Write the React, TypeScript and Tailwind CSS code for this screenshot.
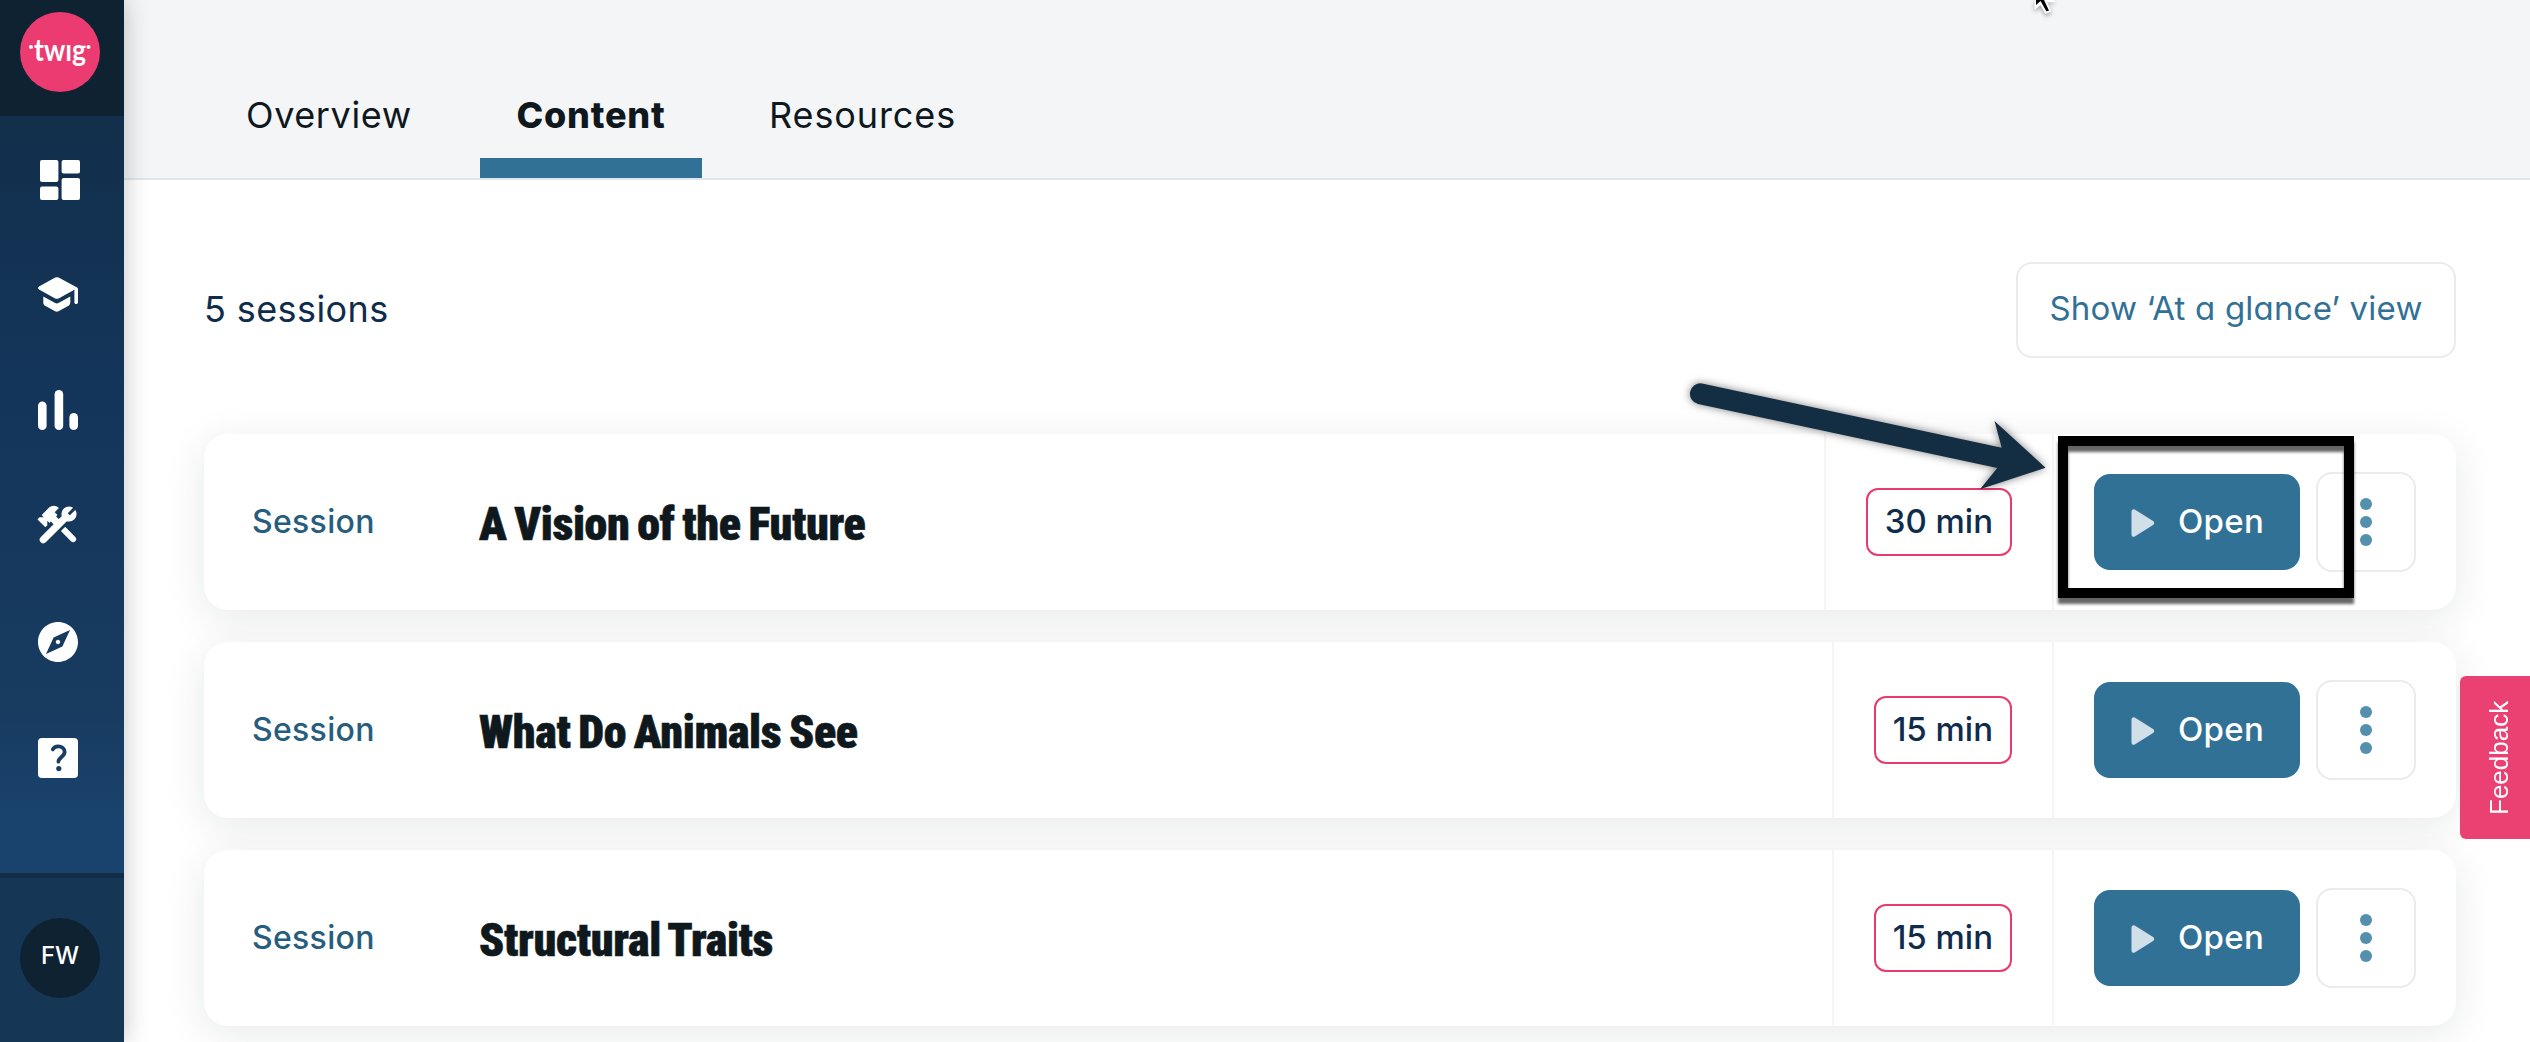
import { MdExplore } from 'react-icons/md';

const sessions = [
  { title: 'A Vision of the Future', time: '30 min' },
  { title: 'What Do Animals See', time: '15 min' },
  { title: 'Structural Traits', time: '15 min' },
];

function DashboardIcon() {
  return (
    <svg className="ml-0.5 size-10" viewBox="0 0 40 40" fill="currentColor">
      <rect x="0" y="0" width="18.4" height="22" rx="2" />
      <rect x="0" y="26.6" width="18.4" height="13.4" rx="2" />
      <rect x="21.6" y="0" width="18.4" height="13.4" rx="2" />
      <rect x="21.6" y="18" width="18.4" height="22" rx="2" />
    </svg>
  );
}

function SchoolIcon() {
  return (
    <svg className="size-10" viewBox="0 2 40 40" fill="currentColor">
      <path d="M5.3 22.6v6.2c0 1.3.7 2.4 1.8 3l10 5.5a3.5 3.5 0 0 0 3.4 0l10-5.5a3.4 3.4 0 0 0 1.8-3v-6.2l-11.8 6.4a3.5 3.5 0 0 1-3.4 0L5.3 22.6z" />
      <path d="M17.2 3.6L1 12.5c-1.2.7-1.2 2.4 0 3.1l16.2 8.8a3.5 3.5 0 0 0 3.4 0l15.8-8.6v12.4c0 1 .8 1.8 1.8 1.8s1.8-.8 1.8-1.8V14.9c0-.6-.4-1.2-.9-1.5L20.6 3.6a3.5 3.5 0 0 0-3.4 0z" />
    </svg>
  );
}

function ChartIcon() {
  return (
    <svg className="size-10" viewBox="0 1 40 40" overflow="visible" fill="currentColor">
      <rect x="0" y="11.5" width="8.6" height="28.5" rx="4.3" />
      <rect x="16.6" y="0" width="8.6" height="40" rx="4.3" />
      <rect x="31.4" y="23" width="8.6" height="17" rx="4.3" />
    </svg>
  );
}

function ToolsIcon() {
  return (
    <svg
      className="-mt-1.5 -mb-0.5 -ml-1 size-12"
      viewBox="0 0 24 24"
      fill="currentColor"
      stroke="currentColor"
      strokeWidth="0.6"
      strokeLinejoin="round"
    >
      <path d="M17.5 10c1.93 0 3.5-1.57 3.5-3.5 0-.58-.16-1.12-.41-1.6l-2.7 2.7-1.49-1.49 2.7-2.7c-.48-.25-1.02-.41-1.6-.41C15.57 3 14 4.57 14 6.5c0 .41.08.8.21 1.16l-1.85 1.85-1.78-1.78.71-.71-1.41-1.41L12 3.49a3 3 0 0 0-4.24 0L4.22 7.03l1.41 1.41H2.81l-.71.71 3.54 3.54.71-.71V9.15l1.41 1.41.71-.71 1.78 1.78-6.7 6.7a1.5 1.5 0 0 0 2.12 2.12L16.34 9.79c.36.13.75.21 1.16.21z" />
      <path d="M15.6 13.3L13.9 15L18.7 19.9a1.2 1.2 0 0 0 1.7-1.7z" />
    </svg>
  );
}

function HelpIcon() {
  return (
    <svg className="size-10" viewBox="0 0 40 40" fill="none">
      <rect width="40" height="40" rx="4" fill="#fff" />
      <path
        d="M14.8 11.4c1-1.9 3-3 5.4-3 3.6 0 6.4 2.3 6.4 5.6 0 4.8-6.2 5.6-6.2 9.6"
        stroke="#183d63"
        strokeWidth="3.8"
        strokeLinecap="round"
      />
      <circle cx="20.8" cy="30.6" r="2.6" fill="#183d63" />
    </svg>
  );
}

function Sidebar() {
  return (
    <aside className="z-10 flex w-[124px] shrink-0 flex-col text-white shadow-[0_0_24px_rgba(0,0,0,0.24)]">
      <div className="flex h-[116px] justify-center bg-[#0e2232] pt-3 pr-1">
        <div className="flex size-20 items-center justify-center rounded-full bg-[#eb3b70]">
          <svg width="64" height="40" viewBox="0 0 64 40" fill="#fff">
            <text
              x="6"
              y="28.5"
              textLength="52"
              lengthAdjust="spacingAndGlyphs"
              className="font-[Lato] text-[30px] font-bold"
            >
              twıg
            </text>
            <circle cx="3" cy="15" r="2" />
            <circle cx="60.5" cy="15" r="2" />
          </svg>
        </div>
      </div>
      <nav className="flex h-[757px] flex-col gap-[75.6px] bg-linear-[180deg,#122f4b_0%,#14355a_35%,#183b60_78%,#19426c_92%,#19426c_100%] pt-11 pl-[38px]">
        <DashboardIcon />
        <SchoolIcon />
        <ChartIcon />
        <ToolsIcon />
        <MdExplore className="-my-1 -ml-1 size-12" />
        <HelpIcon />
      </nav>
      <div className="flex flex-1 justify-center border-t-[5px] border-[#102c46] bg-[#163655] pt-10 pr-1">
        <div className="flex size-20 items-center justify-center rounded-full bg-[#0e2232] pb-1 text-2xl font-medium">
          FW
        </div>
      </div>
    </aside>
  );
}

function Tabs() {
  return (
    <header className="flex h-[180px] shrink-0 items-end border-b-2 border-[#dde7ec] bg-[#f4f5f7] pl-[120px] text-4xl text-[#0e181d]">
      <div className="flex h-[91px] w-[236px] pt-2 pl-0.5 tracking-[0.6px]">Overview</div>
      <div className="flex h-[91px] w-[222px] justify-center border-b-[20px] border-[#317196] pt-2 font-extrabold tracking-[0.8px]">
        Content
      </div>
      <div className="flex h-[91px] pt-2 pl-[67px] tracking-[0.9px]">Resources</div>
    </header>
  );
}

function SessionCard({ title, time }: { title: string; time: string }) {
  return (
    <div className="flex h-44 shrink-0 rounded-3xl bg-white shadow-[0_8px_40px_rgba(20,35,30,0.1)]">
      <div className="flex flex-1 items-center pl-12">
        <span className="w-[227px] pb-px text-[32px] font-medium tracking-[0.3px] text-[#275d7e]">
          Session
        </span>
        <h2 className="pt-1 font-[Roboto] text-[46px] font-black tracking-[-0.35px] text-[#0e181d] [-webkit-text-stroke:0.6px_#0e181d] [font-stretch:75%] [word-spacing:-2.5px]">
          {title}
        </h2>
      </div>
      <div className="flex items-center border-l-2 border-[#f5f5f5] px-10">
        <span className="flex h-[68px] items-center rounded-xl border-2 border-[#e83a6f] px-[17px] pb-px text-[33px] font-medium text-[#102c4c]">
          {time}
        </span>
      </div>
      <div className="flex items-center gap-4 border-l-2 border-[#f5f5f5] px-10">
        <button className="flex h-24 w-[206px] items-center rounded-2xl bg-[#317196] pl-[37px] text-[33px] font-medium text-white">
          <svg className="mt-0.5 mr-[23px] w-6" viewBox="0 0 24 28" fill="#d0dfe8">
            <path d="M.5 2.6C.5.8 2.2-.3 3.7.6l18.4 11.4c1.5.9 1.5 3.1 0 4L3.7 27.4C2.2 28.3.5 27.2.5 25.4z" />
          </svg>
          <span className="pb-px tracking-[0.3px]">Open</span>
        </button>
        <button className="flex h-[100px] w-[100px] flex-col items-center justify-center gap-1.5 rounded-2xl border-2 border-[#ebebeb]">
          <span className="size-3 rounded-full bg-[#558fae]" />
          <span className="size-3 rounded-full bg-[#558fae]" />
          <span className="size-3 rounded-full bg-[#558fae]" />
        </button>
      </div>
    </div>
  );
}

function Annotations() {
  return (
    <>
      <div className="absolute top-[436px] left-[2058px] z-20 h-[162px] w-[296px] border-10 border-black drop-shadow-[0_6px_1.5px_rgba(0,0,0,0.6)]" />
      <svg
        className="absolute top-[360px] left-[1660px] z-20 drop-shadow-[0_0_4px_rgba(0,0,0,0.5)]"
        width="420"
        height="160"
        fill="#132d42"
      >
        <path d="M42 23.5L341.7 87.7L334.5 61L385.6 107.7L320 129.3L337.3 108L38 43.9A10.4 10.4 0 0 1 42 23.5z" />
      </svg>
      <svg
        className="absolute top-0 left-[2030px] z-20 drop-shadow-[0_2px_2px_rgba(0,0,0,0.35)]"
        width="32"
        height="20"
      >
        <path d="M4.5 0V10L10.5 5L15.3 14L21.5 11.5L17 2H25.5L23.5 0z" fill="#fff" />
        <path d="M6 0V5L10.5 1L16.5 11.5L19 10.5L14 0z" fill="#000" />
      </svg>
    </>
  );
}

export default function App() {
  return (
    <div className='relative flex h-[1042px] w-[2530px] overflow-hidden bg-white font-[Inter,"Liberation_Sans",sans-serif] [font-feature-settings:"cv11"]'>
      <Sidebar />
      <main className="flex min-w-0 flex-1 flex-col">
        <Tabs />
        <div className="flex flex-col pr-[74px] pl-20">
          <div className="mt-[82px] flex h-24 items-center justify-between">
            <p className="pb-0.5 text-4xl tracking-[0.4px] text-[#102c4c]">5 sessions</p>
            <button className="flex h-24 w-[440px] items-center justify-center rounded-2xl border-2 border-[#ebebeb] pb-0.5 text-[33px] tracking-[0.2px] text-[#317196]">
              Show ‘At a glance’ view
            </button>
          </div>
          <div className="mt-19 flex flex-col gap-8">
            {sessions.map((s) => (
              <SessionCard key={s.title} {...s} />
            ))}
          </div>
        </div>
      </main>
      <Annotations />
      <button className='absolute top-[676px] right-0 z-20 flex h-[163px] w-[70px] rotate-180 items-center justify-center rounded-r-md bg-[#eb4172] pr-2 font-["Liberation_Sans"] text-[26px] text-white [writing-mode:vertical-rl]'>
        Feedback
      </button>
    </div>
  );
}
